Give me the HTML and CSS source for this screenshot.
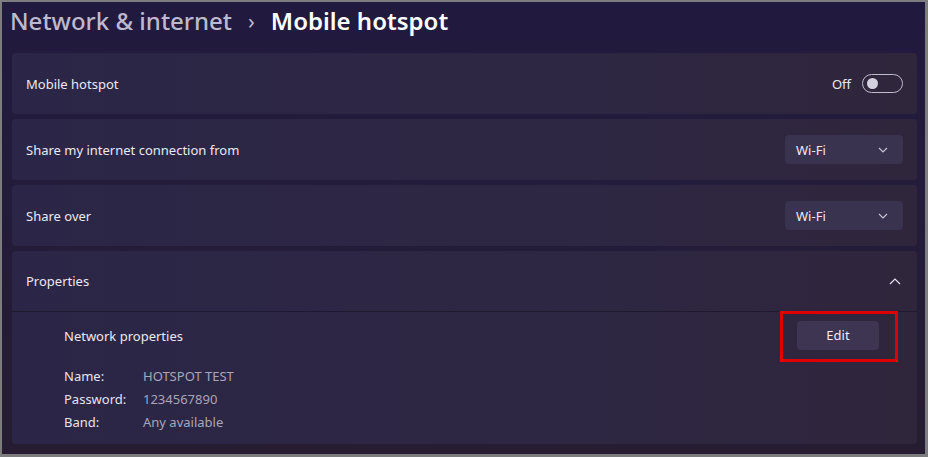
FILE: index.html
```html
<!DOCTYPE html>
<html lang="en">
<head>
    <meta charset="UTF-8">
    <meta name="viewport" content="width=device-width, initial-scale=1">
    <title>Mobile hotspot</title>
    <link rel="stylesheet" href="styles.css">
</head>
<body>
    <div class="window">
        <h1 class="crumbs">
            <span class="parent">Network &amp; internet</span>
            <span class="sep">&#8250;</span>
            <span class="current">Mobile hotspot</span>
        </h1>

        <div class="card row">
            <span class="label">Mobile hotspot</span>
            <div class="toggle-wrap">
                <span>Off</span>
                <span class="toggle"><span class="knob"></span></span>
            </div>
        </div>

        <div class="card row">
            <span class="label">Share my internet connection from</span>
            <div class="select">
                <span>Wi-Fi</span>
                <svg width="10" height="6" viewBox="0 0 10 6"><path d="M1 1l4 4 4-4" fill="none" stroke="#c9c5d6" stroke-width="1.1"/></svg>
            </div>
        </div>

        <div class="card row">
            <span class="label">Share over</span>
            <div class="select">
                <span>Wi-Fi</span>
                <svg width="10" height="6" viewBox="0 0 10 6"><path d="M1 1l4 4 4-4" fill="none" stroke="#c9c5d6" stroke-width="1.1"/></svg>
            </div>
        </div>

        <div class="card props">
            <div class="row props-head">
                <span class="label">Properties</span>
                <svg width="12" height="7" viewBox="0 0 12 7"><path d="M1 6l5-5 5 5" fill="none" stroke="#e4e1ee" stroke-width="1.2"/></svg>
            </div>
            <div class="props-body">
                <div class="props-top">
                    <span>Network properties</span>
                    <div class="edit-mark">
                        <button class="edit">Edit</button>
                    </div>
                </div>
                <table class="details">
                    <tr><td>Name:</td><td>HOTSPOT TEST</td></tr>
                    <tr><td>Password:</td><td>1234567890</td></tr>
                    <tr><td>Band:</td><td>Any available</td></tr>
                </table>
            </div>
        </div>
    </div>
</body>
</html>
```

FILE: styles.css
```css
html, body {
    margin: 0;
    height: 100%;
}

body {
    background-color: #7d7d80;
    font-family: 'Noto Sans', 'Open Sans', sans-serif;
    color: #ebe8f2;
    padding: 2px 3px 3px 2px;
    box-sizing: border-box;
}

.window {
    height: 100%;
    box-sizing: border-box;
    background: linear-gradient(180deg, #211a3f 0%, #231c3a 45%, #261d32 100%);
    padding: 0 8px 0 10px;
    display: flex;
    flex-direction: column;
    gap: 5px;
}

.crumbs {
    margin: 0 0 0 -8px;
    height: 46px;
    display: flex;
    align-items: center;
    gap: 16px;
    font-size: 24px;
    font-weight: 600;
    padding-left: 6px;
    padding-bottom: 10px;
    box-sizing: border-box;
}

.parent {
    color: #bdb9ce;
    font-weight: 500;
}

.sep {
    color: #bdb9ce;
    font-size: 22px;
    font-weight: 400;
}

.current {
    color: #ffffff;
}

.card {
    background: linear-gradient(90deg, #2b2647 0%, #2e2743 60%, #2f263c 100%);
    border-radius: 4px;
}

.row {
    display: flex;
    align-items: center;
    justify-content: space-between;
    padding: 0 14px;
    height: 60px;
    font-size: 13px;
}

.card.row {
    height: 61px;
}

.toggle-wrap {
    display: flex;
    align-items: center;
    gap: 11px;
    font-size: 13px;
}

.toggle {
    width: 35px;
    height: 17px;
    border: 1px solid #bfbccb;
    border-radius: 10px;
    display: flex;
    align-items: center;
    padding-left: 4px;
    box-sizing: content-box;
}

.knob {
    width: 11px;
    height: 11px;
    border-radius: 50%;
    background-color: #d4d1de;
}

.select {
    width: 118px;
    height: 29px;
    box-sizing: border-box;
    background-color: #3a3350;
    border-radius: 4px;
    display: flex;
    align-items: center;
    justify-content: space-between;
    padding: 0 15px 0 11px;
    font-size: 13px;
}

.props {
    flex: 1;
    margin-bottom: 10px;
    display: flex;
    flex-direction: column;
}

.props-head {
    border-bottom: 1px solid #1f1a30;
    padding-right: 16px;
}

.props-body {
    padding: 0 19px 0 52px;
    font-size: 13px;
}

.props-top {
    display: flex;
    align-items: center;
    justify-content: space-between;
    height: 48px;
}

.edit-mark {
    border: 3px solid #e00000;
    padding: 7px 16px 9px 14px;
}

.edit {
    width: 82px;
    height: 29px;
    border: none;
    border-radius: 4px;
    background-color: #3d3551;
    color: #f1eef6;
    font-family: inherit;
    font-size: 13px;
}

.details {
    border-collapse: collapse;
    margin-top: 4px;
}

.details td {
    padding: 0;
    height: 23px;
}

.details td:first-child {
    width: 79px;
    color: #e6e3ee;
}

.details td:last-child {
    color: #aaa5b8;
}
```
